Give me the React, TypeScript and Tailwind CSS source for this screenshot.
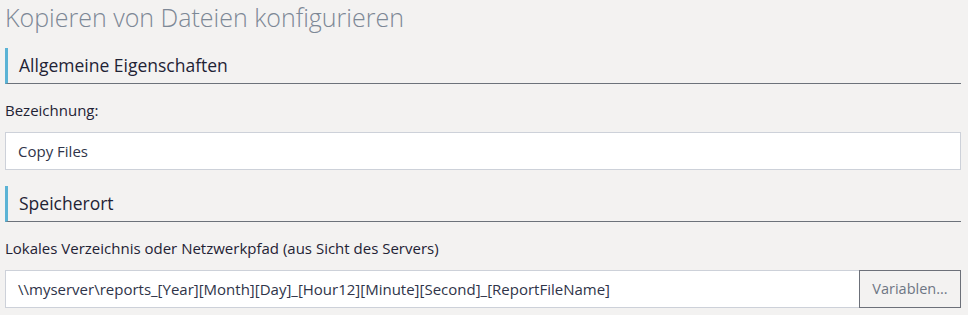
import React from 'react';

const font = { fontFamily: '"Open Sans", sans-serif' };

const SectionHeader: React.FC<{ title: string }> = ({ title }) => (
  <div className="flex h-[36px] items-center border-b border-l-[3px] border-b-[#6c727a] border-l-[#5bb3d5] pl-[11px]">
    <span className="text-[17.5px] text-[#1f2335]">{title}</span>
  </div>
);

export default function App() {
  return (
    <div className="min-h-[315px] w-[968px] bg-[#f3f2f1] pl-[5px] pr-[7px]" style={font}>
      <div className="flex h-[48px] items-start">
        <h1 className="mt-[1px] text-[25px] font-light leading-[32px] text-[#7d8896]">
          Kopieren von Dateien konfigurieren
        </h1>
      </div>

      <SectionHeader title="Allgemeine Eigenschaften" />

      <div className="flex h-[48px] items-center pt-[5px] text-[15px] text-[#1f2335]">Bezeichnung:</div>
      <div className="flex h-[38px] items-center border border-[#cdd1d9] bg-white px-[12px] text-[15px] text-[#2f3449]">
        Copy Files
      </div>

      <div className="h-[16px]" />
      <SectionHeader title="Speicherort" />

      <div className="flex h-[48px] items-center pt-[5px] text-[15px] text-[#1f2335]">
        Lokales Verzeichnis oder Netzwerkpfad (aus Sicht des Servers)
      </div>
      <div className="flex h-[38px]">
        <div className="flex flex-1 items-center border border-r-0 border-[#cdd1d9] bg-white px-[12px] text-[15px] text-[#2f3449]">
          {'\\\\myserver\\reports_[Year][Month][Day]_[Hour12][Minute][Second]_[ReportFileName]'}
        </div>
        <button className="w-[102px] border border-[#6c7079] bg-[#f3f2f1] text-[14.5px] text-[#6e7684]">
          Variablen...
        </button>
      </div>
    </div>
  );
}
